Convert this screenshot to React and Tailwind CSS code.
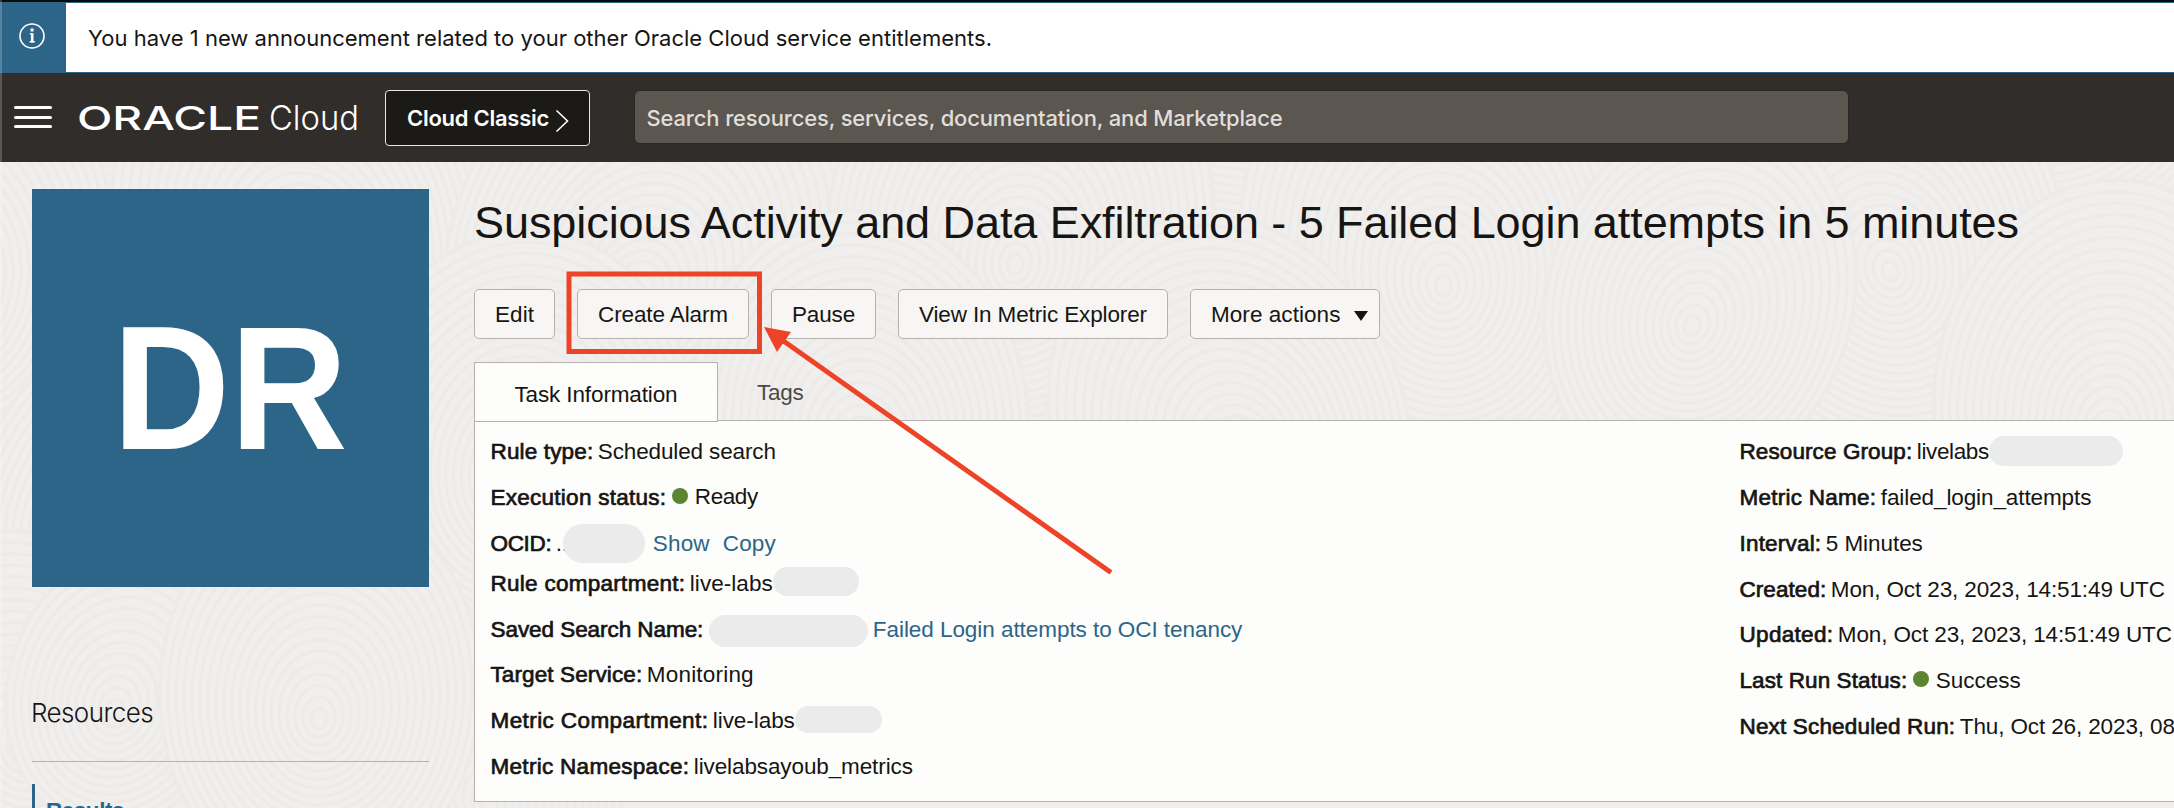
import { useLayoutEffect, useRef } from "react";

/* Tracks a run of text out (or in) so that it takes up exactly `w` pixels. */
function Fit({ w, className = "", children }) {
  const ref = useRef(null);
  useLayoutEffect(() => {
    const el = ref.current;
    el.style.letterSpacing = "0px";
    const natural = el.getBoundingClientRect().width;
    el.style.letterSpacing = `${(w - natural) / el.textContent.length}px`;
  }, [w, children]);
  return (
    <span ref={ref} className={`inline-block whitespace-pre ${className}`}>
      {children}
    </span>
  );
}

const SWIRLS = [
  [60, 20, 230], [420, -30, 260], [820, 30, 250], [1230, -20, 260], [1620, 20, 240], [2060, -10, 270],
  [-60, 250, 220], [300, 230, 230], [650, 260, 250], [1020, 230, 240], [1440, 250, 250], [1880, 240, 230],
  [130, 520, 200], [520, 450, 220], [860, 420, 210], [1230, 430, 220], [1700, 300, 190], [2110, 400, 220],
  [20, 720, 190], [480, 780, 170], [120, 690, 140], [320, 690, 200],
];

function Backdrop() {
  return (
    <svg className="absolute inset-0 h-full w-full" viewBox="0 162 2174 646" preserveAspectRatio="none" aria-hidden="true">
      {SWIRLS.map(([x, y, r], i) => (
        <g key={i} transform={`rotate(${((i * 37) % 50) - 25} ${x} ${y})`} fill="none" stroke="#ecebea" strokeWidth="3.5">
          <ellipse cx={x} cy={y} rx={r * 0.8} ry={r} fill="#f0efee" />
          {Array.from({ length: Math.floor(r / 10) }, (_, k) => (
            <ellipse key={k} cx={x} cy={y + k * 1.5} rx={(r - k * 10) * 0.8} ry={r - k * 10} />
          ))}
        </g>
      ))}
    </svg>
  );
}

function Announcement() {
  return (
    <div className="flex h-[73px] shrink-0 flex-col border-t-2 border-[#0b0b0b] bg-white font-['Inter',sans-serif]">
      <div className="flex h-[71px] items-stretch border-y border-[#2c6588]">
        <div className="flex w-[66px] justify-center bg-[#2c6588] pt-[20px]">
          <svg width="26" height="26" viewBox="0 0 26 26" fill="none" stroke="#fff" className="ml-[-2px]">
            <circle cx="13" cy="13" r="12" strokeWidth="1.6" />
            <path d="M13.2 10.2V19.4" strokeWidth="2.600" />
            <path d="M10.8 10.9H13.6M10.6 18.8H15.8" strokeWidth="1.4" />
            <path d="M11.6 7H14.6" strokeWidth="3" />
          </svg>
        </div>
        <div className="flex items-center pl-[22px] pt-[1px] text-[22px] leading-none text-[#161513]">
          <Fit w={904}>You have 1 new announcement related to your other Oracle Cloud service entitlements.</Fit>
        </div>
      </div>
    </div>
  );
}

function Header() {
  return (
    <header className="flex h-[89px] shrink-0 items-start bg-[#312d2a] font-['Inter',sans-serif] text-white">
      <div className="ml-[14px] mt-[33px] flex w-[38px] flex-col gap-[6.5px]">
        <span className="h-[3px] rounded-full bg-white" />
        <span className="h-[3px] rounded-full bg-white" />
        <span className="h-[3px] rounded-full bg-white" />
      </div>
      <svg className="ml-[25px] mt-[23px] h-[44px] w-[286px] shrink-0" viewBox="0 0 286 44" fill="#fff">
        <text x="0" y="34" textLength="184" lengthAdjust="spacingAndGlyphs" fontSize="33" className="font-['Inter',sans-serif] font-medium">ORACLE</text>
        <text x="192" y="34" textLength="90" lengthAdjust="spacingAndGlyphs" fontSize="34" className="font-['Inter',sans-serif] font-light">Cloud</text>
      </svg>
      <button className="ml-[22px] mt-[17px] flex h-[56px] w-[205px] items-center rounded-[4px] border border-[#e8e6e3] bg-[#1b1a16] pl-[21px] text-[22px] font-semibold leading-none">
        <Fit w={142}>Cloud Classic</Fit>
        <svg className="ml-[6px] mt-[6px]" width="14" height="24" viewBox="0 0 14 24" fill="none" stroke="#fff" strokeWidth="1.6">
          <path d="M1.5 1.5 12.5 12 1.5 22.5" />
        </svg>
      </button>
      <div className="ml-[44px] mt-[17px] flex h-[54px] w-[1215px] items-center rounded-[6px] border border-[#292623] bg-[#5b5650] pl-[11.5px] pt-[1px] text-[22px] font-medium leading-none text-[#e0deda]">
        <Fit w={636}>Search resources, services, documentation, and Marketplace</Fit>
      </div>
    </header>
  );
}

function Sidebar() {
  return (
    <aside className="relative ml-[32px] mt-[27px] w-[397px] shrink-0">
      <div className="flex h-[398px] items-center justify-center bg-[#2c6588] text-[176px] font-bold leading-none text-white">
        <span className="mt-[-1px] inline-block origin-center scale-x-[0.925]">DR</span>
      </div>
      <div className="mt-[98px] flex h-[77px] border-b border-[#b5b1ae] pt-[12px] font-['Inter',sans-serif] text-[26px] font-light leading-[32px] text-[#161513]">
        <Fit w={122} className="ml-[-1px]">Resources</Fit>
      </div>
      <div className="mt-[22px] h-[60px] border-l-[3px] border-[#2c6588] pl-[11px] pt-[14px] text-[22.5px] font-bold leading-[25px] text-[#2c6588]">
        <Fit w={78}>Results</Fit>
      </div>
    </aside>
  );
}

function ActionButton({ width, w, children, arrow }) {
  return (
    <button className={`flex h-[50px] items-center rounded-[5px] border border-[#b5b1ae] bg-[#f7f6f4] pl-[20px] pt-[3px] text-[22.5px] leading-none text-[#161513] ${width}`}>
      <Fit w={w}>{children}</Fit>
      {arrow && (
        <svg className="ml-[13px]" width="14" height="10" viewBox="0 0 14 10" fill="#161513">
          <path d="M0 0H14L7 10Z" />
        </svg>
      )}
    </button>
  );
}

function Label({ w, children }) {
  return (
    <Fit w={w + 0.8} className="mr-[4.5px] [-webkit-text-stroke:0.7px_#161513]">
      {children}
    </Fit>
  );
}

function Row({ className = "h-[46px]", children }) {
  return <div className={`flex items-center whitespace-nowrap ${className}`}>{children}</div>;
}

function Redacted({ className }) {
  return <span className={`shrink-0 rounded-full bg-[#ebebeb] ${className}`} />;
}

function StatusDot() {
  return <span className="mb-[4px] ml-[1.5px] mr-[6.5px] h-[16px] w-[16px] rounded-full bg-[#5c8532]" />;
}

function TaskInformation() {
  return (
    <div className="relative flex h-[382px] border border-r-0 border-[#b5b1ae] bg-[#fdfdfb] pt-[8px] text-[22.5px] leading-[26px] text-[#161513]">
      <div className="ml-[15.5px] w-[1249px] shrink-0">
        <Row>
          <Label w={102}>Rule type:</Label>
          <Fit w={178}>Scheduled search</Fit>
        </Row>
        <Row>
          <Label w={175}>Execution status:</Label>
          <StatusDot />
          <Fit w={63} className="mb-[2px]">Ready</Fit>
        </Row>
        <Row>
          <Label w={60}>OCID:</Label>
          <Fit w={12}>..</Fit>
          <Redacted className="mb-[1px] ml-[-4.5px] h-[39px] w-[82px]" />
          <Fit w={57} className="ml-[7.5px] text-[#2c6588]">Show</Fit>
          <Fit w={53} className="ml-[13px] text-[#2c6588]">Copy</Fit>
        </Row>
        <Row className="mb-[6px] h-[34px]">
          <Label w={194}>Rule compartment:</Label>
          <Fit w={83}>live-labs</Fit>
          <Redacted className="mb-[5px] h-[29px] w-[86px]" />
        </Row>
        <Row>
          <Label w={212}>Saved Search Name:</Label>
          <Redacted className="ml-px mr-[12px] mt-[2px] h-[32px] w-[159px]" />
          <Fit w={369.5} className="ml-[-7px] text-[#2c6588]">Failed Login attempts to OCI tenancy</Fit>
        </Row>
        <Row className="h-[44px]">
          <Label w={151}>Target Service:</Label>
          <Fit w={107}>Monitoring</Fit>
        </Row>
        <Row className="h-[47px]">
          <Label w={217}>Metric Compartment:</Label>
          <Fit w={82}>live-labs</Fit>
          <Redacted className="mb-[2px] h-[27px] w-[87px]" />
        </Row>
        <Row>
          <Label w={198}>Metric Namespace:</Label>
          <Fit w={219}>livelabsayoub_metrics</Fit>
        </Row>
      </div>
      <div className="shrink-0">
        <Row>
          <Label w={172}>Resource Group:</Label>
          <Fit w={72}>livelabs</Fit>
          <Redacted className="mb-[2px] h-[30px] w-[134px]" />
        </Row>
        <Row>
          <Label w={136}>Metric Name:</Label>
          <Fit w={210.5}>failed_login_attempts</Fit>
        </Row>
        <Row>
          <Label w={81}>Interval:</Label>
          <Fit w={97}>5 Minutes</Fit>
        </Row>
        <Row className="h-[45px]">
          <Label w={86}>Created:</Label>
          <Fit w={334}>Mon, Oct 23, 2023, 14:51:49 UTC</Fit>
        </Row>
        <Row>
          <Label w={93}>Updated:</Label>
          <Fit w={334}>Mon, Oct 23, 2023, 14:51:49 UTC</Fit>
        </Row>
        <Row>
          <Label w={167}>Last Run Status:</Label>
          <StatusDot />
          <Fit w={85}>Success</Fit>
        </Row>
        <Row>
          <Label w={215}>Next Scheduled Run:</Label>
          <Fit w={215}>Thu, Oct 26, 2023, 08</Fit>
        </Row>
      </div>
    </div>
  );
}

function Callout() {
  return (
    <svg className="pointer-events-none absolute left-[560px] top-[265px]" width="560" height="315" viewBox="560 265 560 315" aria-hidden="true">
      <rect x="569" y="274" width="190.5" height="77.5" fill="none" stroke="#ed4326" strokeWidth="5" />
      <path d="M780 338.500 1111 572.500" stroke="#ed4326" strokeWidth="5" />
      <path d="M764 327 791 332 777 352Z" fill="#ed4326" />
    </svg>
  );
}

export default function App() {
  return (
    <div className="relative flex h-[808px] w-[2174px] flex-col overflow-hidden bg-[#efeeed] font-['Liberation_Sans',Arial,sans-serif]">
      <Announcement />
      <Header />
      <div className="relative flex min-h-0 flex-1 overflow-hidden">
        <Backdrop />
        <Sidebar />
        <main className="relative ml-[45px] w-[1700px] shrink-0 pt-[35px]">
          <h1 className="h-[56px] text-[45px] leading-[51px] text-[#161513]">
            <Fit w={1545}>Suspicious Activity and Data Exfiltration - 5 Failed Login attempts in 5 minutes</Fit>
          </h1>
          <div className="mt-[36px] flex gap-[22px]">
            <ActionButton width="w-[81px]" w={39}>Edit</ActionButton>
            <ActionButton width="w-[172px]" w={130}>Create Alarm</ActionButton>
            <ActionButton width="w-[105px]" w={63}>Pause</ActionButton>
            <ActionButton width="w-[270px]" w={228}>View In Metric Explorer</ActionButton>
            <ActionButton width="w-[190px]" w={129.5} arrow>More actions</ActionButton>
          </div>
          <div className="mt-[23px] flex h-[58px] text-[22.5px] leading-[26px]">
            <div className="relative z-10 flex h-[60px] w-[244px] justify-center border border-[#b5b1ae] bg-[#fdfdfb] pt-[19px] text-[#161513]">
              <Fit w={163}>Task Information</Fit>
            </div>
            <div className="ml-[39px] pt-[18px] text-[#4c4946]">
              <Fit w={46.5}>Tags</Fit>
            </div>
          </div>
          <TaskInformation />
        </main>
      </div>
      <Callout />
      <div className="pointer-events-none absolute inset-y-0 left-0 w-[2px] bg-white/20" />
    </div>
  );
}
